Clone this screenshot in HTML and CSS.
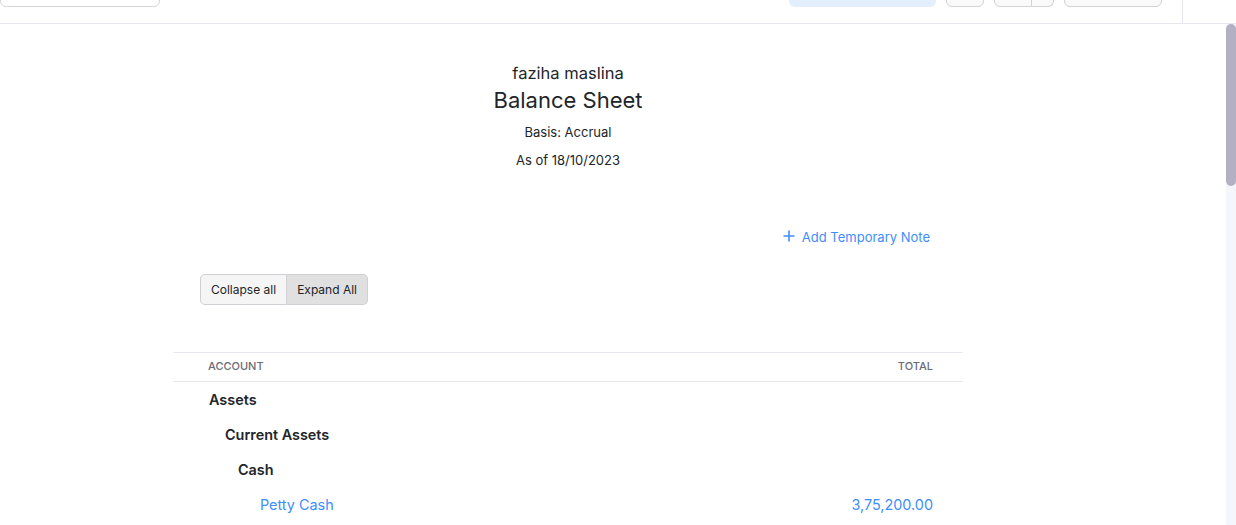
FILE: index.html
```html
<!DOCTYPE html>
<html>
<head>
<meta charset="utf-8">
<link rel="stylesheet" href="styles.css">
</head>
<body>
<div class="app">
  <header class="topbar">
    <div class="tb-left">
      <button class="tb-select"></button>
    </div>
    <div class="tb-right">
      <button class="tb-primary"></button>
      <button class="tb-btn tb-sq"></button>
      <div class="tb-split">
        <button class="tb-btn tb-split-main"></button>
        <button class="tb-btn tb-split-caret"></button>
      </div>
      <button class="tb-btn tb-wide"></button>
      <div class="tb-divider"></div>
    </div>
  </header>
  <div class="body-row">
    <main class="content">
      <div class="report">
        <div class="report-head">
          <div class="org">faziha maslina</div>
          <h1 class="title">Balance Sheet</h1>
          <div class="meta">Basis: Accrual</div>
          <div class="meta date">As of 18/10/2023</div>
        </div>
        <div class="note-row">
          <a class="add-note">
            <svg class="plus" width="12" height="12" viewBox="0 0 12 12"><path d="M6 0.5v11M0.5 6h11" stroke="currentColor" stroke-width="1.6" fill="none"/></svg>
            Add Temporary Note
          </a>
        </div>
        <div class="toggle">
          <button class="tg">Collapse all</button>
          <button class="tg active">Expand All</button>
        </div>
        <table class="bs">
          <thead>
            <tr><th class="acc">Account</th><th class="tot">Total</th></tr>
          </thead>
          <tbody>
            <tr class="grp l0"><td>Assets</td><td></td></tr>
            <tr class="grp l1"><td>Current Assets</td><td></td></tr>
            <tr class="grp l2"><td>Cash</td><td></td></tr>
            <tr class="leaf l3"><td><a>Petty Cash</a></td><td class="amt"><a>3,75,200.00</a></td></tr>
          </tbody>
        </table>
      </div>
    </main>
    <div class="scrollbar"><div class="thumb"></div></div>
  </div>
</div>
</body>
</html>
```
FILE: styles.css
```css
* { box-sizing: border-box; }
html, body { margin: 0; padding: 0; height: 100%; overflow: hidden; }
body {
  font-family: Inter, "Noto Sans", "Liberation Sans", sans-serif;
  color: #212529;
  background: #fff;
}
.app { display: flex; flex-direction: column; height: 100vh; }

.topbar {
  height: 24px;
  flex: none;
  border-bottom: 1px solid #e6e6ec;
  display: flex;
  justify-content: space-between;
  align-items: flex-start;
}
.tb-left, .tb-right { display: flex; align-items: flex-start; height: 23px; }
button { font-family: inherit; }
.tb-select {
  width: 160px; height: 34px; margin-top: -27px;
  border: 1px solid #d4d4de; border-radius: 6px; background: #fff;
}
.tb-primary {
  width: 147px; height: 34px; margin-top: -27px;
  border: none; border-radius: 6px; background: #e3effd;
}
.tb-btn {
  height: 34px; margin-top: -27px;
  border: 1px solid #d2d2d6; border-radius: 6px; background: #fafafa;
}
.tb-sq { width: 38px; margin-left: 10px; }
.tb-split { display: flex; margin-left: 10px; }
.tb-split-main { width: 38px; border-radius: 6px 0 0 6px; }
.tb-split-caret { width: 22px; border-left: none; border-radius: 0 6px 6px 0; }
.tb-wide { width: 98px; margin-left: 10px; }
.tb-divider { width: 1px; height: 23px; background: #e6e6ec; margin-left: 20px; margin-right: 53px; }

.body-row { flex: 1; display: flex; min-height: 0; }
.content { flex: 1; overflow: hidden; }
.scrollbar { width: 10px; flex: none; background: #f5f5fc; }
.thumb { height: 162px; background: #b3b0c4; border-radius: 5px; }

.report {
  width: 790px;
  margin-left: 173px;
  padding-top: 39px;
}
.report-head { text-align: center; }
.org { font-size: 16.5px; line-height: 20px; }
.title { margin: 3px 0 0; font-size: 22px; line-height: 28px; font-weight: 400; }
.meta { font-size: 13px; line-height: 18px; margin-top: 9px; }
.meta.date { margin-top: 10px; }

.note-row { display: flex; justify-content: flex-end; padding-right: 33px; margin-top: 59px; }
.add-note {
  display: flex; align-items: center; gap: 7px;
  font-size: 13px; line-height: 18px; color: #408dfb; cursor: pointer;
}
.plus { margin-top: -2px; }

.toggle { display: flex; margin: 28px 0 0 27px; }
.tg {
  height: 31px; padding: 0 10px; white-space: nowrap;
  font-size: 12px; color: #212529;
  background: #f5f5f5; border: 1px solid #cfcfd4;
}
.tg:first-child { border-radius: 5px 0 0 5px; }
.tg.active { background: #e0e0e0; border-left: none; border-radius: 0 5px 5px 0; }

.bs { width: 100%; border-collapse: collapse; margin-top: 47px; }
.bs th {
  height: 29px; padding: 0 0 2px;
  font-size: 11px; font-weight: 500; text-transform: uppercase; color: #6b6b76;
  border-top: 1px solid #e6e6ec; border-bottom: 1px solid #e6e6ec;
}
.bs th.acc { text-align: left; padding-left: 35px; }
.bs th.tot { text-align: right; padding-right: 30px; }
.bs td { height: 35px; padding: 0; font-size: 14.4px; }
.bs td.amt { text-align: right; padding-right: 30px; }
.bs a { color: #408dfb; cursor: pointer; }
.grp td { font-weight: 600; }
.l0 td:first-child { padding-left: 36px; }
.l1 td:first-child { padding-left: 52px; }
.l2 td:first-child { padding-left: 65px; }
.l3 td:first-child { padding-left: 87px; }
```
